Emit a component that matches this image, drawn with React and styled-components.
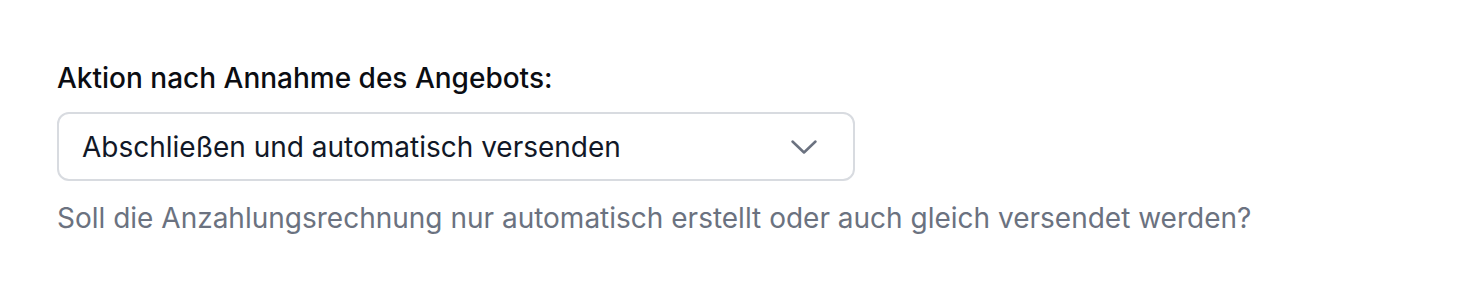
import React, { useState } from "react";
import styled, { createGlobalStyle } from "styled-components";

const GlobalStyle = createGlobalStyle`
  body {
    margin: 0;
    background: #fff;
    font-family: Inter, "Noto Sans", sans-serif;
  }
`;

const Page = styled.div`
  padding: 58px 57px;
`;

const Field = styled.div`
  display: flex;
  flex-direction: column;
  width: 798px;
`;

const Label = styled.label`
  font-size: 28px;
  line-height: 40px;
  font-weight: 500;
  color: #0b0d12;
  margin-bottom: 14px;
`;

const SelectBox = styled.button`
  display: flex;
  align-items: center;
  justify-content: space-between;
  box-sizing: border-box;
  height: 69px;
  width: 798px;
  padding: 0 35px 0 23px;
  background: #fff;
  border: 2px solid #d8dbe0;
  border-radius: 12px;
  font-family: inherit;
  font-size: 28px;
  color: #111827;
  cursor: pointer;
  text-align: left;
`;

const Help = styled.p`
  margin: 17px 0 0;
  font-size: 28px;
  line-height: 40px;
  color: #6b7280;
  white-space: nowrap;
`;

const Chevron = () => (
  <svg width="28" height="16" viewBox="0 0 28 16" fill="none" stroke="#6b7280" strokeWidth="2.5" strokeLinecap="round" strokeLinejoin="round">
    <path d="M2.5 2.5L14 13.5L25.5 2.5" />
  </svg>
);

export default function App() {
  const [value] = useState("Abschließen und automatisch versenden");
  return (
    <Page>
      <GlobalStyle />
      <Field>
        <Label>Aktion nach Annahme des Angebots:</Label>
        <SelectBox type="button">
          <span>{value}</span>
          <Chevron />
        </SelectBox>
        <Help>Soll die Anzahlungsrechnung nur automatisch erstellt oder auch gleich versendet werden?</Help>
      </Field>
    </Page>
  );
}
